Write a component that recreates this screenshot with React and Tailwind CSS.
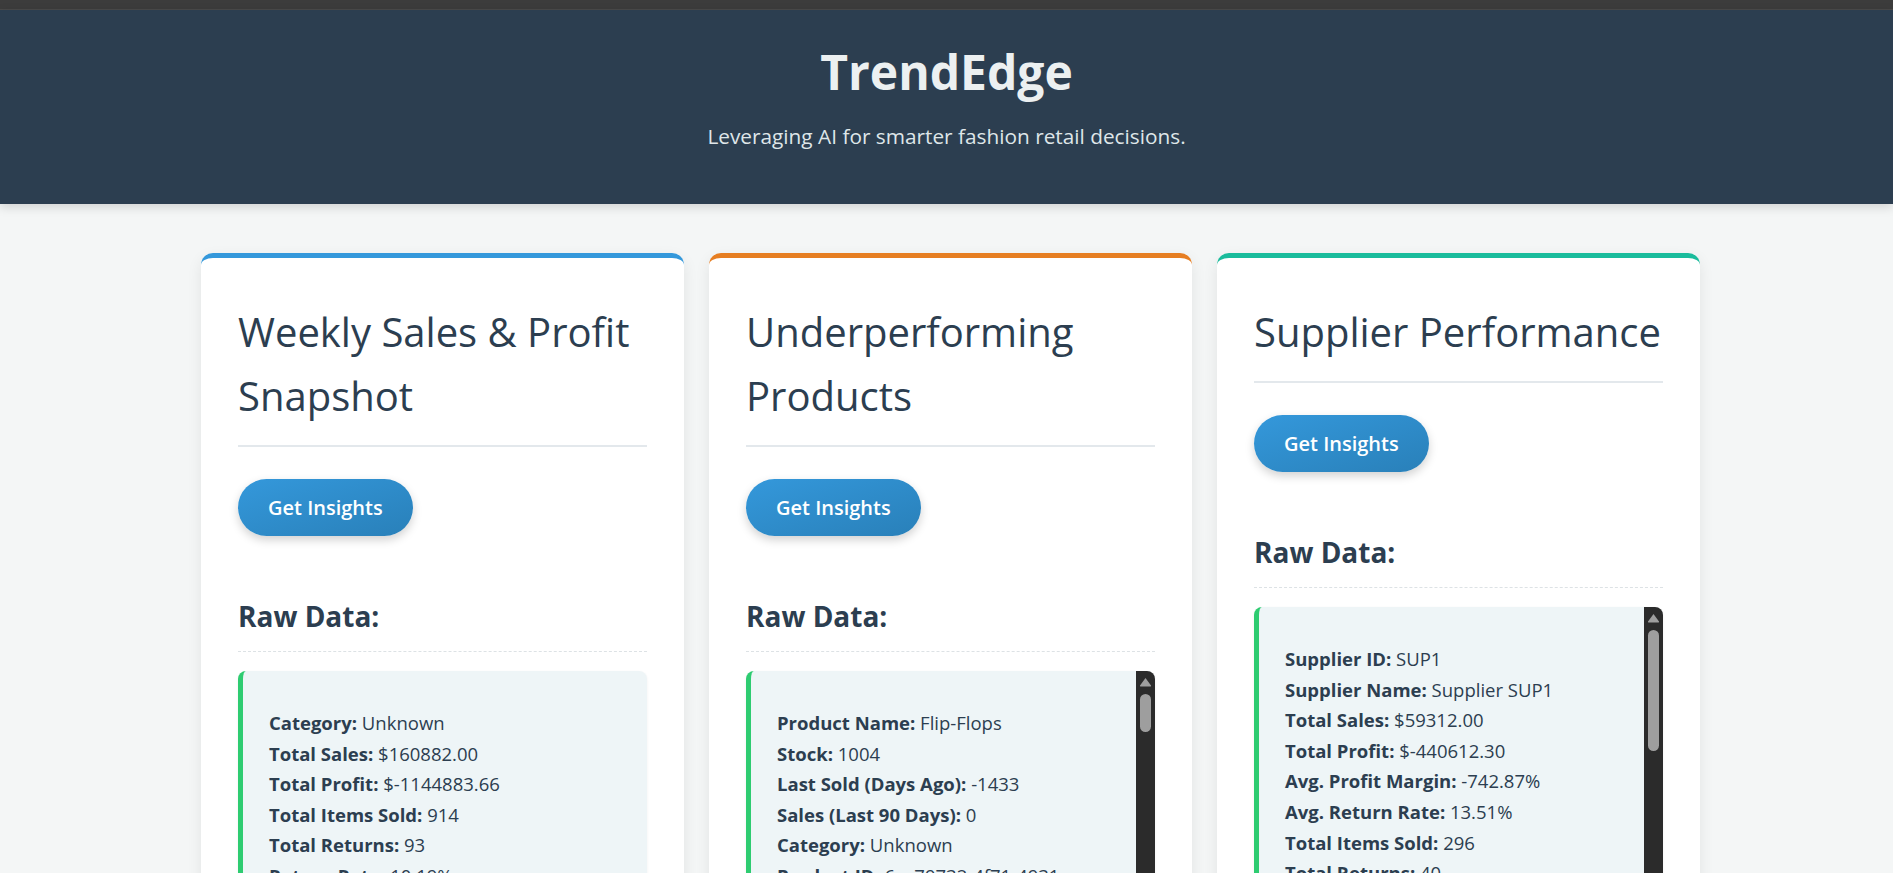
import React from 'react';

const font = { fontFamily: '"Open Sans", "Noto Sans", sans-serif' };

const cards = [
  {
    title: 'Weekly Sales & Profit Snapshot',
    accent: 'border-t-[#3498db]',
    scroll: null,
    rows: [
      ['Category', 'Unknown'],
      ['Total Sales', '$160882.00'],
      ['Total Profit', '$-1144883.66'],
      ['Total Items Sold', '914'],
      ['Total Returns', '93'],
      ['Return Rate', '10.19%'],
      ['Avg. Profit Margin', '-711.61%'],
    ],
  },
  {
    title: 'Underperforming Products',
    accent: 'border-t-[#e67e22]',
    scroll: { thumbTop: 'mt-[7px]', thumbH: 'h-[38px]' },
    rows: [
      ['Product Name', 'Flip-Flops'],
      ['Stock', '1004'],
      ['Last Sold (Days Ago)', '-1433'],
      ['Sales (Last 90 Days)', '0'],
      ['Category', 'Unknown'],
      ['Product ID', '6ac79732-4f71-4931'],
      ['Supplier', 'SUP3'],
    ],
  },
  {
    title: 'Supplier Performance',
    accent: 'border-t-[#1abc9c]',
    scroll: { thumbTop: 'mt-[7px]', thumbH: 'h-[121px]' },
    rows: [
      ['Supplier ID', 'SUP1'],
      ['Supplier Name', 'Supplier SUP1'],
      ['Total Sales', '$59312.00'],
      ['Total Profit', '$-440612.30'],
      ['Avg. Profit Margin', '-742.87%'],
      ['Avg. Return Rate', '13.51%'],
      ['Total Items Sold', '296'],
      ['Total Returns', '40'],
      ['Return Rate', '13.51%'],
    ],
  },
];

function FakeScrollbar({ thumbTop, thumbH }) {
  return (
    <div className="w-[19px] shrink-0 bg-[#2b2b2b] flex flex-col items-center pt-[6px]">
      <svg width="13" height="10" viewBox="0 0 13 10">
        <path d="M6.5 1 L12 8.5 Q12.5 9.5 11.3 9.5 L1.7 9.5 Q0.5 9.5 1 8.5 Z" fill="#9e9e9e" />
      </svg>
      <div className={`${thumbTop} ${thumbH} w-[11px] rounded-full bg-[#9e9e9e]`} />
    </div>
  );
}

function Card({ card }) {
  return (
    <div className={`w-[483px] shrink-0 bg-white rounded-[12px] border-t-[5px] ${card.accent} shadow-[0_5px_15px_rgba(0,0,0,0.08)] px-[37px] pt-[42px] pb-10`}>
      <h2 className="text-[40px] leading-[64px] font-medium text-[#2c3e50] pb-[17px] border-b-2 border-[#e3e8ec]">
        {card.title}
      </h2>
      <button className="mt-[32px] h-[57px] px-[30px] rounded-full bg-gradient-to-br from-[#3498db] to-[#2980b9] text-white text-[20px] font-semibold shadow-[0_4px_10px_rgba(0,0,0,0.18)]">
        Get Insights
      </button>
      <h3 className="mt-[58px] text-[28px] leading-[45px] font-bold text-[#2c3e50] pb-[12px] border-b border-dashed border-[#dde2e5]">
        Raw Data:
      </h3>
      <div className="mt-[19px] flex rounded-[8px] border-l-[5px] border-[#2ecc71] bg-[#eef5f7] shadow-[0_1px_3px_rgba(0,0,0,0.06)] overflow-hidden h-[420px]">
        <div className="flex-1 pl-[26px] pt-[37px] text-[18.5px] leading-[30.6px] text-[#2c3e50]">
          {card.rows.map(([k, v]) => (
            <div key={k} className="whitespace-nowrap">
              <span className="font-bold">{k}:</span> {v}
            </div>
          ))}
        </div>
        {card.scroll && <FakeScrollbar {...card.scroll} />}
      </div>
    </div>
  );
}

export default function App() {
  return (
    <div className="h-[873px] overflow-hidden bg-[#f4f6f6]" style={font}>
      <div className="h-[10px] bg-[#3c3c3c] border-b border-[#4a4a4a]" />
      <header className="h-[194px] bg-[#2c3e50] text-center shadow-[0_3px_10px_rgba(0,0,0,0.15)] pt-[30px]">
        <h1 className="text-[48px] leading-[64px] font-bold text-[#ecf0f1]">TrendEdge</h1>
        <p className="mt-[17px] text-[20.8px] leading-[30px] text-[#dfe6e9]">
          Leveraging AI for smarter fashion retail decisions.
        </p>
      </header>
      <main className="pl-[9px] pt-[49px]">
        <div className="mx-auto w-[1500px] flex gap-[25px] items-start">
          {cards.map((c) => (
            <Card key={c.title} card={c} />
          ))}
        </div>
      </main>
    </div>
  );
}
